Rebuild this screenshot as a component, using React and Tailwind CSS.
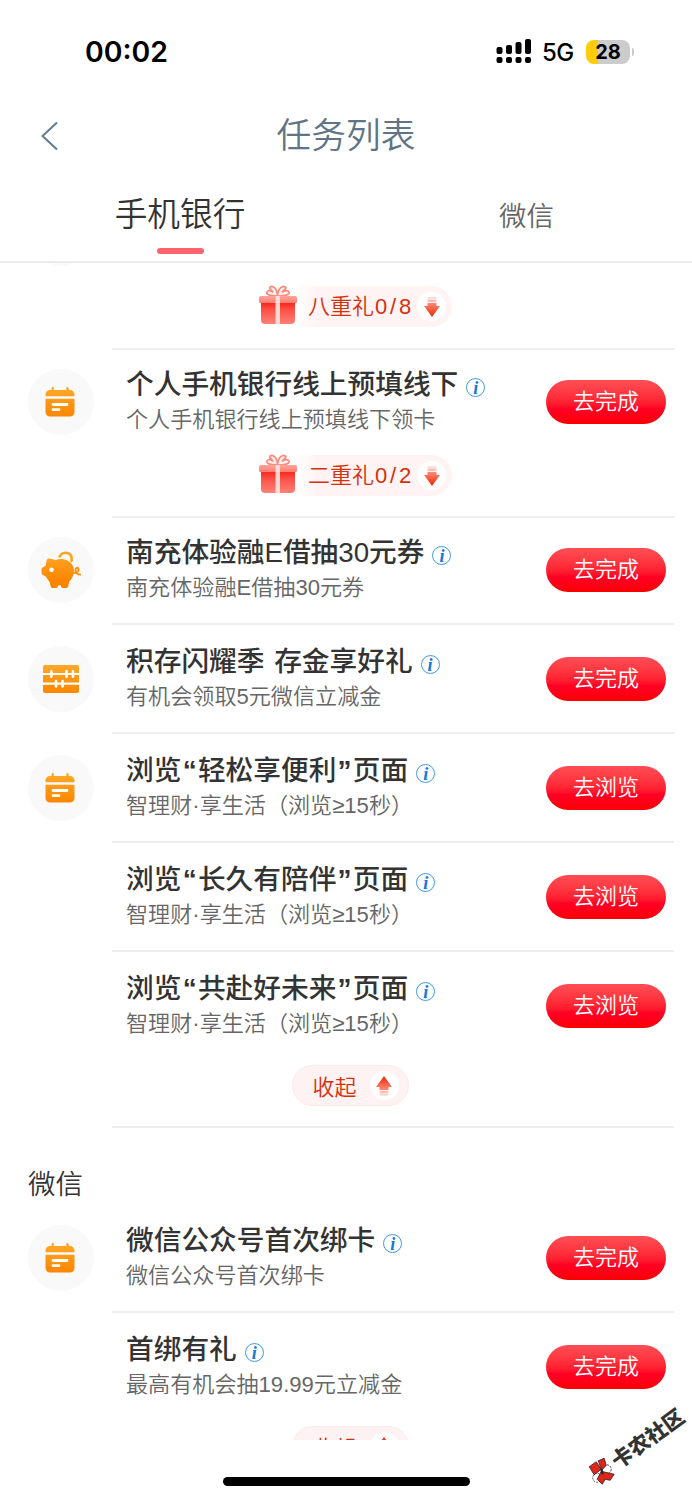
const sections = [
    {
        tasks: [
            { icon: "calendar", title: "个人手机银行线上预填线下", desc: "个人手机银行线上预填线下领卡", action: "去完成", gift: ["二重礼", "0/2"] },
            { icon: "piggy", title: "南充体验融E借抽30元券", desc: "南充体验融E借抽30元券", action: "去完成" },
            { icon: "abacus", title: "积存闪耀季 存金享好礼", desc: "有机会领取5元微信立减金", action: "去完成", compact: true },
            { icon: "calendar", title: "浏览“轻松享便利”页面", desc: "智理财·享生活（浏览≥15秒）", action: "去浏览", compact: true },
            { title: "浏览“长久有陪伴”页面", desc: "智理财·享生活（浏览≥15秒）", action: "去浏览", compact: true },
            { title: "浏览“共赴好未来”页面", desc: "智理财·享生活（浏览≥15秒）", action: "去浏览", compact: true },
        ],
    },
    {
        name: "微信",
        tasks: [
            { icon: "calendar", title: "微信公众号首次绑卡", desc: "微信公众号首次绑卡", action: "去完成", first: true },
            { title: "首绑有礼", desc: "最高有机会抽19.99元立减金", action: "去完成", compact: true },
        ],
    },
];

// Shared orange gradient for the task icons
function OrangeFill({ id }) {
    return (
        <defs>
            <linearGradient id={id} x1="0" y1="0" x2="0" y2="30" gradientUnits="userSpaceOnUse">
                <stop offset="0" stopColor="#ffaa2b" />
                <stop offset="1" stopColor="#fb8500" />
            </linearGradient>
        </defs>
    );
}

function CalendarIcon() {
    return (
        <svg viewBox="0 0 30 30" className="-ml-[2px] size-[30px]">
            <OrangeFill id="cal" />
            <path fill="url(#cal)" d="M6.500 1.200a1.200 1.200 0 0 1 2.400 0V3h12.400V1.200a1.200 1.200 0 0 1 2.400 0V3h1.300a4.400 4.400 0 0 1 4.500 4.500v1.800H.5V7.500A4.400 4.400 0 0 1 5 3h1.500z" />
            <path fill="url(#cal)" d="M.5 11.700h29V25a4.500 4.500 0 0 1-4.500 4.500H5A4.500 4.500 0 0 1 .5 25z" />
            <path stroke="#fff" strokeWidth="2.800" strokeLinecap="round" d="M8 17.500h14M8 22.700h6" />
        </svg>
    );
}

function PiggyIcon() {
    return (
        <svg viewBox="0 0 40 38" className="h-[38px] w-10">
            <OrangeFill id="pig" />
            <path fill="none" stroke="#ffa326" strokeWidth="2.600" strokeLinecap="round" d="M18.700 5.500c2.500-5.500 13.300-5.500 11.800 4.500" />
            <path fill="url(#pig)" d="M5.500 10c0-1.800 1.500-2.800 3-2.400l6 1.300c3-1 6-1.200 9-.5 5.500 1.200 9.500 5.600 9.500 11.200 0 4.700-2 8.500-4.800 11.200l-1 4.700c-.2.900-.8 1.400-1.700 1.400h-3.700c-.9 0-1.500-.500-1.700-1.400l-.500-1.300h-2.200l-.500 1.300c-.3.900-.9 1.400-1.800 1.400h-3.700c-.9 0-1.500-.500-1.700-1.400l-1-4.200-4-5.700-2.700-1.700C.9 23.100.5 22.300.5 21.400v-2.800c0-1 .5-1.600 1.300-2l2.900-2z" />
            <circle cx="10.500" cy="18.700" r="2.300" fill="#fff" />
            <path fill="none" stroke="#fa9416" strokeWidth="2" strokeLinecap="round" d="M33 22c3-.3 5-2 4.500-4-.5-1.800-3-1.300-3 1 0 2.500 1.500 4.700 4.700 4.600" />
        </svg>
    );
}

function AbacusIcon() {
    return (
        <svg viewBox="0 0 38 30" className="h-[30px] w-[38px]">
            <OrangeFill id="aba" />
            <rect x="1" y="1" width="36" height="28" rx="2" fill="url(#aba)" />
            <path stroke="#fff" strokeWidth="2.200" fill="none" d="M0 10h38M0 19.700h38" />
            <path stroke="#fff" strokeWidth="2.600" strokeLinecap="round" d="M9.300 7.300v5.400M24.500 7.300v5.400M31 7.300v5.400M14 17v5.400M20.500 17v5.400" />
        </svg>
    );
}

const icons = { calendar: CalendarIcon, piggy: PiggyIcon, abacus: AbacusIcon };

function Arrow({ up }) {
    const id = up ? "arrowUp" : "arrowDown";
    return (
        <span className="flex size-[29px] items-center justify-center rounded-full bg-white">
            <svg viewBox="0 0 16 20" className={up ? "h-5 w-4 rotate-180" : "h-5 w-4"}>
                <defs>
                    <linearGradient id={id} x1="0" y1="0" x2="0" y2="1">
                        <stop offset="0" stopColor="#ff8a78" />
                        <stop offset="1" stopColor="#e62800" />
                    </linearGradient>
                </defs>
                <path fill="#ffe0db" d="M3.500 0h9v2h-9z" />
                <path fill="#ffbdb3" d="M3.500 2.500h9v2.700h-9z" />
                <path fill={`url(#${id})`} d="M3.500 6h9v3H16l-8 11L0 9h3.500z" />
            </svg>
        </span>
    );
}

function GiftIcon() {
    return (
        <svg viewBox="0 0 40 40" className="relative -mt-1 size-10">
            <defs>
                <linearGradient id="box" x1="0" y1="17" x2="0" y2="39" gradientUnits="userSpaceOnUse">
                    <stop offset="0" stopColor="#f5231a" />
                    <stop offset=".35" stopColor="#fc5046" />
                    <stop offset="1" stopColor="#ff8177" />
                </linearGradient>
                <linearGradient id="lid" x1="0" y1="0" x2="0" y2="1">
                    <stop offset="0" stopColor="#ffa69c" />
                    <stop offset="1" stopColor="#ff7c70" />
                </linearGradient>
            </defs>
            <path fill="#fff0ee" stroke="#fb8a7e" strokeWidth="1.700" d="M19 11C13 11 8 10 9 7c1-2.300 4-1.700 6 .3C14 5 10.500 3.500 12 2c2.500-2 7 .5 7.500 9C20 2.500 25 0 27.500 2c1.500 1.500-2 3-3.500 5.300 2-2 6-2.500 7-.3 1 3-4.500 4-11.500 4z" />
            <path fill="url(#box)" d="M3 17h34v18a4 4 0 0 1-4 4H7a4 4 0 0 1-4-4z" />
            <rect x="1" y="11" width="38" height="7" rx="1.500" fill="url(#lid)" />
            <path fill="#ffe3df" d="M17.500 11h4.500v28h-4.500z" opacity=".9" />
        </svg>
    );
}

function GiftPill({ label, count }) {
    return (
        <div className="mx-auto flex h-[41px] w-[194px] items-center">
            <GiftIcon />
            <div className="-ml-1 flex h-[41px] flex-1 items-center rounded-r-full bg-linear-to-r from-white to-[#fff3f3] to-15% pr-[6px] pl-[14px]">
                <span className="flex-1 pt-px text-[22px] leading-none font-[350] whitespace-nowrap text-[#d4300c]">
                    {label}
                    <span className="ml-px -mr-1 tracking-[2.800px]">{count}</span>
                </span>
                <Arrow />
            </div>
        </div>
    );
}

function CollapsePill() {
    return (
        <div className="mx-auto flex h-[41px] w-[117px] items-center justify-between rounded-full border border-[#ffe9e9] bg-[#fff2f3] pr-[9px] pl-5 text-[22px] leading-none font-[350] text-[#d4300c]">
            <span className="pt-[5px]">收起</span>
            <Arrow up />
        </div>
    );
}

function InfoIcon() {
    return (
        <span className="mt-[11px] ml-2 flex size-[19px] shrink-0 items-center justify-center rounded-full border border-[#3f9bea] font-['Liberation_Serif',serif] text-[18px] leading-none font-bold text-[#1478d4] italic">
            i
        </span>
    );
}

// Curly quotes get a fixed slot so they don't take a full character width
function Title({ text }) {
    return (
        <h2 className="h-9 text-[27.700px] leading-[36px] font-medium [word-spacing:2px] whitespace-nowrap text-[#333]">
            {text.split(/([“”])/).map((part, i) =>
                part === "“" || part === "”" ? (
                    <span key={i} className="inline-block w-[16.500px] text-center font-['Liberation_Sans',sans-serif] text-[28px] leading-none font-bold">{part}</span>
                ) : (
                    part
                )
            )}
        </h2>
    );
}

function TaskRow({ task }) {
    const Icon = icons[task.icon];
    return (
        <div className="flex h-[109px] pl-7">
            <div className="w-[84px] shrink-0 pt-[21px]">
                {Icon && (
                    <div className="flex size-[66px] items-center justify-center rounded-full bg-[#f9f9f9]">
                        <Icon />
                    </div>
                )}
            </div>
            {/* compact rows pull the divider up a little without moving the text */}
            <div className={`mr-[18px] flex flex-1 justify-between border-t-2 pr-2 pl-[14px] ${task.first ? "border-transparent" : "border-[#eee]"} ${task.compact ? "-mt-[2px] pt-[2px]" : ""}`}>
                <div className="pt-[17px]">
                    <div className="flex">
                        <Title text={task.title} />
                        <InfoIcon />
                    </div>
                    <p className="h-[34px] text-[22.100px] leading-[34px] font-[350] whitespace-nowrap text-[#666]">{task.desc}</p>
                </div>
                <button className="mt-[30px] h-[44px] w-[120px] rounded-full bg-linear-to-b from-[#ff4d55] via-[#ff0024] via-65% to-[#fb0000] text-[22px] leading-none font-[350] text-white">
                    {task.action}
                </button>
            </div>
        </div>
    );
}

function StatusBar() {
    return (
        <div className="flex h-[103px] items-center pl-[85px] font-['Inter',sans-serif] text-black">
            <span className="w-[411px] pt-px text-[28.400px] leading-none font-semibold">00:02</span>
            <svg viewBox="0 0 36 26" className="h-[26px] w-9">
                <rect x="0.500" y="8" width="6" height="7" rx="2" />
                <rect x="10" y="6" width="6" height="9" rx="2" />
                <rect x="19.500" y="3" width="6" height="12" rx="2" />
                <rect x="29" y="0" width="6" height="15" rx="2" />
                <rect x="0.500" y="18" width="6" height="6" rx="2" />
                <rect x="10" y="18" width="6" height="6" rx="2" />
                <rect x="19.500" y="18" width="6" height="6" rx="2" />
                <rect x="29" y="18" width="6" height="6" rx="2" />
            </svg>
            <span className="ml-[10px] w-[34px] pt-[2px] text-[24px] leading-none font-medium tracking-tight">5G</span>
            <span className="ml-[10px] flex h-6 w-11 items-center justify-center rounded-lg bg-linear-to-r from-[#ffcc0a] from-28% to-[#ccc] to-28% text-[20px] leading-none font-bold">28</span>
            <span className="ml-[2px] h-2 w-[2px] rounded-r-full bg-[#ccc]" />
        </div>
    );
}

function Watermark() {
    return (
        <div className="absolute top-[1428px] left-[580px] flex h-9 w-[114px] -rotate-[36deg] items-center">
            <svg viewBox="0 0 28 28" className="size-7 shrink-0 rotate-[36deg]">
                <g stroke="#222" strokeWidth=".8" fill="#e1251b" strokeLinejoin="round">
                    <circle cx="18.500" cy="12" r="4.500" fill="#fff" strokeDasharray="2 1" />
                    <circle cx="9" cy="20.500" r="4.500" fill="#fff" strokeDasharray="2 1" />
                    <path d="M1 9.500l7-5 5 7.500-7 5.500z" />
                    <path d="M10 3.500l6-2.500 2 7-4.500 5z" />
                    <path d="M13 14l13 3-4 6-5-1-3 5-5-5z" />
                    <path d="M13 12l1.500 5" strokeWidth="2" />
                </g>
            </svg>
            <span className="text-[21px] leading-none font-black whitespace-nowrap text-[#333]">卡农社区</span>
        </div>
    );
}

export default function App() {
    return (
        <div className="relative flex h-[1500px] w-[692px] flex-col overflow-hidden bg-white font-['Liberation_Sans','Noto_Sans_CJK_SC',sans-serif]">
            <StatusBar />

            {/* Page header */}
            <header className="flex h-[66px] items-center">
                <svg viewBox="0 0 18 30" className="ml-10 h-[30px] w-[18px]" fill="none" stroke="#5f7b91" strokeWidth="2">
                    <path d="M17 1.500L2.500 15 17 28.500" />
                </svg>
                <h1 className="mr-[58px] flex-1 text-center text-[34.700px] leading-none font-[350] text-[#5f7486]">任务列表</h1>
            </header>

            {/* Tabs */}
            <nav className="flex h-[94px] shrink-0 border-b-2 border-[#ececec] pl-[7px]">
                <div className="flex w-[346px] shrink-0 flex-col items-center pt-[25px]">
                    <span className="h-[42px] text-[32.700px] leading-[42px] font-[350] text-[#333]">手机银行</span>
                    <span className="mt-3 h-[6px] w-[47px] rounded-full bg-[#ff646e]" />
                </div>
                <div className="w-[346px] shrink-0 pt-7 pl-px text-center text-[27.500px] leading-10 font-[350] text-[#666]">微信</div>
            </nav>

            {/* Task list */}
            <main className="h-[1177px] shrink-0 overflow-hidden">
                <div className="-mt-[63px] ml-7 size-[66px] rounded-full bg-[#f9f9f9]" />
                <div className="mt-5 mr-[-18px] mb-[21px]">
                    <div className="w-[710px]">
                        <GiftPill label="八重礼" count="0/8" />
                    </div>
                </div>
                {sections.map((section, s) => (
                    <section key={s}>
                        {section.name && (
                            <h3 className="h-[76px] pt-[37px] pl-7 text-[27.500px] leading-10 font-[350] text-[#333]">{section.name}</h3>
                        )}
                        {section.tasks.map((task) => (
                            <div key={task.title}>
                                <TaskRow task={task} />
                                {task.gift && (
                                    <div className="-mt-[2px] w-[710px] pb-5">
                                        <GiftPill label={task.gift[0]} count={task.gift[1]} />
                                    </div>
                                )}
                            </div>
                        ))}
                        <div className="mt-1 w-[700px]">
                            <CollapsePill />
                        </div>
                        <div className="mt-5 mr-[18px] ml-28 h-[2px] bg-[#eee]" />
                    </section>
                ))}
            </main>

            <Watermark />
            <div className="mt-[37px] ml-[223px] h-[9px] w-[247px] shrink-0 rounded-full bg-black" />
        </div>
    );
}
